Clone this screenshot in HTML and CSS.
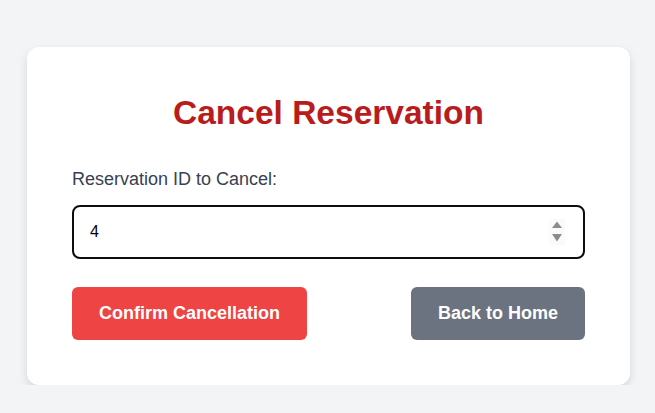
FILE: index.html
```html
<!DOCTYPE html>
<html lang="en">
<head>
<meta charset="utf-8">
<title>Cancel Reservation</title>
<link rel="stylesheet" href="styles.css">
</head>
<body>
<main class="page">
  <section class="card">
    <h1 class="title">Cancel Reservation</h1>
    <form class="form">
      <label class="label" for="rid">Reservation ID to Cancel:</label>
      <div class="field">
        <input class="input" id="rid" type="text" value="4">
        <span class="spinner" aria-hidden="true">
          <svg width="10" height="22" viewBox="0 0 10 22">
            <path d="M5 0.5 L10 7 L0 7 Z" fill="#8c8c8c"/>
            <path d="M0 13 L10 13 L5 20.5 Z" fill="#8c8c8c"/>
          </svg>
        </span>
      </div>
      <div class="actions">
        <button type="button" class="btn btn-danger">Confirm Cancellation</button>
        <button type="button" class="btn btn-muted">Back to Home</button>
      </div>
    </form>
  </section>
</main>
</body>
</html>
```
FILE: styles.css
```css
html, body {
  margin: 0;
  padding: 0;
  background: #f3f4f6;
  font-family: "Liberation Sans", Arial, sans-serif;
}

.page {
  display: flex;
  justify-content: center;
  padding: 47px 25px 0 27px;
}

.card {
  width: 603px;
  box-sizing: border-box;
  background: #ffffff;
  border-radius: 12px;
  box-shadow: 0 4px 10px rgba(0, 0, 0, 0.12);
  padding: 47px 45px 45px;
}

.title {
  margin: 0 0 38px;
  text-align: center;
  color: #b91c1c;
  font-size: 33.5px;
  font-weight: 700;
  line-height: 37px;
}

.form {
  display: flex;
  flex-direction: column;
}

.label {
  color: #374151;
  font-size: 18px;
  line-height: 21px;
  margin-bottom: 15px;
}

.field {
  display: flex;
  align-items: center;
  border: 2px solid #0d0d0d;
  border-radius: 8px;
  padding: 0 18px 0 16px;
  height: 50px;
}

.input {
  flex: 1;
  border: 0;
  outline: none;
  padding: 0;
  margin: 0;
  font-family: "Liberation Sans", Arial, sans-serif;
  font-size: 16px;
  line-height: 20px;
  color: #000;
  background: transparent;
}

.spinner {
  display: flex;
  align-items: center;
  justify-content: center;
  width: 16px;
  height: 26px;
  background: #fafafa;
}

.spinner svg {
  display: block;
}

.actions {
  display: flex;
  justify-content: space-between;
  margin-top: 28px;
}

.btn {
  border: 0;
  border-radius: 6px;
  padding: 16px 27px;
  font-family: "Liberation Sans", Arial, sans-serif;
  font-size: 18px;
  font-weight: 700;
  line-height: 21px;
  color: #ffffff;
  cursor: pointer;
}

.btn-danger {
  background: #ef4444;
}

.btn-muted {
  background: #6b7280;
}
```
